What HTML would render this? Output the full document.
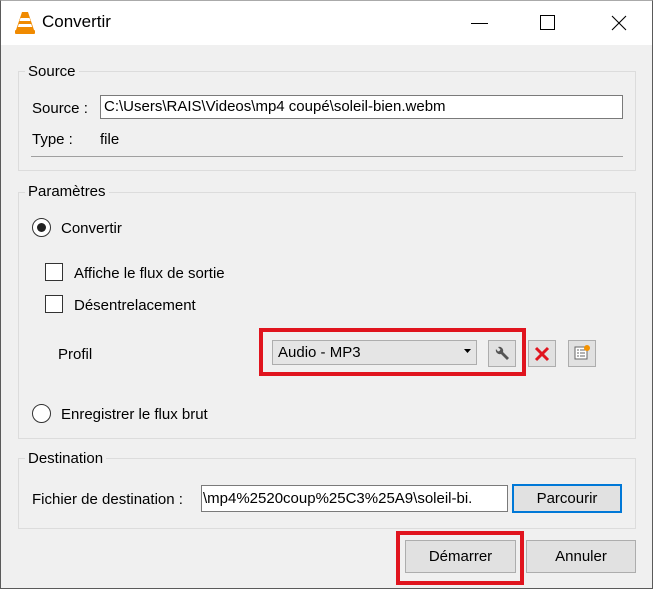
<!DOCTYPE html>
<html><head><meta charset="utf-8"><style>
*{box-sizing:border-box;margin:0;padding:0}
body{width:653px;height:589px;overflow:hidden;background:#f0f0f0;font-family:"Liberation Sans",sans-serif;font-size:15px;color:#000;position:relative}
.win{position:absolute;left:0;top:0;width:653px;height:589px;border:1px solid #5a5a5a;border-top-color:#aaa}
.a{position:absolute;white-space:nowrap}
.tb{position:absolute;left:0;top:0;width:651px;height:44px;background:#fff}
.grp{position:absolute;border:1px solid #dcdcdc}
.lbl{position:absolute;background:#f0f0f0;padding:0 3px;line-height:16px}
.inp{position:absolute;background:#fff;border:1px solid #7a7a7a;line-height:22px;padding-left:3px;overflow:hidden;white-space:nowrap}
.btn{position:absolute;background:#e1e1e1;border:1px solid #adadad;text-align:center}
.chk{position:absolute;width:18px;height:18px;border:1px solid #333;background:#fff}
.rad{position:absolute;width:19px;height:19px;border:1px solid #333;border-radius:50%;background:#fff}
.red{position:absolute;border:4px solid #e0141e}
</style></head><body><div class="win">
<div class="tb"></div>
<svg class="a" style="left:13px;top:10px" width="22" height="24" viewBox="0 0 22 24"><path d="M8 1h6l6 18H2z" fill="#f08a00"/><path d="M6.5 7h9l1 3h-11zM4.8 13h12.4l1 3H3.8z" fill="#fff"/><rect x="1" y="19" width="20" height="4" rx="1" fill="#f08a00"/></svg>
<div class="a" style="left:41px;top:11px;font-size:17px">Convertir</div>
<div class="a" style="left:470px;top:22px;width:17px;height:1px;background:#000"></div>
<div class="a" style="left:539px;top:14px;width:15px;height:15px;border:1px solid #000"></div>
<svg class="a" style="left:610px;top:14px" width="16" height="16"><path d="M1 1L15 15M15 1L1 15" stroke="#000" stroke-width="1.1"/></svg>

<div class="grp" style="left:17px;top:70px;width:618px;height:100px"></div>
<div class="lbl" style="left:24px;top:63px">Source</div>
<div class="a" style="left:31px;top:99px">Source :</div>
<div class="inp" style="left:99px;top:94px;width:523px;height:24px">C:\Users\RAIS\Videos\mp4 coupé\soleil-bien.webm</div>
<div class="a" style="left:31px;top:130px">Type :</div>
<div class="a" style="left:99px;top:130px">file</div>
<div class="a" style="left:30px;top:155px;width:592px;height:1px;background:#a0a0a0"></div>

<div class="grp" style="left:17px;top:191px;width:618px;height:247px"></div>
<div class="lbl" style="left:24px;top:183px">Paramètres</div>
<div class="rad" style="left:31px;top:217px"></div><div class="a" style="left:36px;top:222px;width:9px;height:9px;border-radius:50%;background:#222"></div>
<div class="a" style="left:60px;top:219px">Convertir</div>
<div class="chk" style="left:44px;top:262px"></div><div class="a" style="left:73px;top:264px">Affiche le flux de sortie</div>
<div class="chk" style="left:44px;top:294px"></div><div class="a" style="left:73px;top:296px">Désentrelacement</div>
<div class="a" style="left:57px;top:345px">Profil</div>
<div class="red" style="left:258px;top:327px;width:267px;height:48px"></div>
<div class="btn" style="left:271px;top:339px;width:205px;height:25px;text-align:left;padding-left:5px;line-height:23px;background:#e5e5e5">Audio - MP3</div>
<svg class="a" style="left:463px;top:348px" width="8" height="5"><path d="M0 0h7L3.5 4z" fill="#000"/></svg>
<div class="btn" style="left:487px;top:339px;width:28px;height:27px"></div>
<svg class="a" style="left:492px;top:344px" width="18" height="18" viewBox="0 0 18 18"><path d="M3 4a4 4 0 0 0 5 5l6 6 2-2-6-6a4 4 0 0 0-5-5l2.5 2.5-1 1.5L5 6.5z" fill="#555"/></svg>
<div class="btn" style="left:527px;top:339px;width:28px;height:27px"></div>
<svg class="a" style="left:533px;top:345px" width="16" height="16"><path d="M2 2L14 14M14 2L2 14" stroke="#e0141e" stroke-width="3"/></svg>
<div class="btn" style="left:567px;top:339px;width:28px;height:27px"></div>
<svg class="a" style="left:572px;top:343px" width="20" height="20"><rect x="2" y="3" width="12" height="12" fill="#fff" stroke="#666"/><path d="M4 6h2M7 6h5M4 9h2M7 9h5M4 12h2M7 12h5" stroke="#666"/><circle cx="14" cy="4" r="3" fill="#f39200"/></svg>
<div class="rad" style="left:31px;top:403px"></div>
<div class="a" style="left:60px;top:405px">Enregistrer le flux brut</div>

<div class="grp" style="left:17px;top:457px;width:618px;height:71px"></div>
<div class="lbl" style="left:24px;top:450px">Destination</div>
<div class="a" style="left:31px;top:490px">Fichier de destination :</div>
<div class="inp" style="left:200px;top:484px;width:307px;height:27px;line-height:25px;padding-left:1px">\mp4%2520coup%25C3%25A9\soleil-bi.</div>
<div class="btn" style="left:511px;top:483px;width:110px;height:29px;border:2px solid #0078d7;line-height:25px">Parcourir</div>

<div class="red" style="left:395px;top:530px;width:128px;height:54px"></div>
<div class="btn" style="left:404px;top:539px;width:111px;height:33px;line-height:31px">Démarrer</div>
<div class="btn" style="left:525px;top:539px;width:110px;height:33px;line-height:31px">Annuler</div>
</div></body></html>
